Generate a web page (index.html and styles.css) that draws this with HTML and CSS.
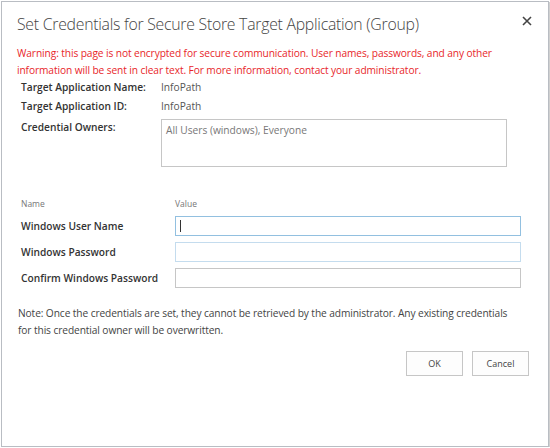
FILE: index.html
```html
<!DOCTYPE html>
<html>
<head>
<meta charset="utf-8">
<link rel="stylesheet" href="styles.css">
</head>
<body>
<div class="dialog">
  <div class="header">
    <h1 class="title">Set Credentials for Secure Store Target Application (Group)</h1>
    <span class="close">
      <svg width="10" height="10" viewBox="0 0 10 10"><path d="M1 1L9 9M9 1L1 9" stroke="#444" stroke-width="1.6"/></svg>
    </span>
  </div>
  <p class="warning">Warning: this page is not encrypted for secure communication. User names, passwords, and any other information will be sent in clear text. For more information, contact your administrator.</p>
  <div class="info">
    <div class="label">Target Application Name:</div><div class="value">InfoPath</div>
    <div class="label">Target Application ID:</div><div class="value">InfoPath</div>
    <div class="label owners-label">Credential Owners:</div><div class="owners">All Users (windows), Everyone</div>
  </div>
  <div class="creds">
    <div class="colhead">Name</div><div class="colhead">Value</div>
    <div class="flabel">Windows User Name</div><div class="field focus"><span class="caret"></span></div>
    <div class="flabel">Windows Password</div><div class="field light"></div>
    <div class="flabel">Confirm Windows Password</div><div class="field"></div>
  </div>
  <p class="note">Note: Once the credentials are set, they cannot be retrieved by the administrator. Any existing credentials for this credential owner will be overwritten.</p>
  <div class="buttons">
    <button class="btn">OK</button>
    <button class="btn">Cancel</button>
  </div>
</div>
</body>
</html>
```
FILE: styles.css
```css
html, body { margin: 0; padding: 0; background: #fff; }
body { font-family: "Open Sans", "Noto Sans", sans-serif; color: #444; }
.dialog {
  box-sizing: border-box;
  width: 548px;
  height: 446px;
  margin: 1px 0 0 1px;
  border: 1px solid #b9bdc3;
  box-shadow: 1px 1px 0 #d0d0d0, 2px 2px 1px #e0e0e0;
  background: #fff;
  padding: 0 0 0 15px;
}
.header { display: flex; align-items: flex-start; justify-content: space-between; padding: 10px 14px 0 0; }
.title { margin: 0; font-weight: 300; font-size: 15.8px; line-height: 24px; color: #444; letter-spacing: -0.25px; }
.close { padding: 4px 2px 0 0; line-height: 0; }
.warning { margin: 9px 20px 0 0; color: #e8262a; font-size: 10.2px; line-height: 17px; letter-spacing: -0.1px; }
.info { display: grid; grid-template-columns: 140px 346px; row-gap: 0; margin: -1px 0 0 4px; font-size: 10.2px; }
.label { font-weight: 600; color: #333; line-height: 19px; }
.value { color: #555; line-height: 19px; }
.owners-label { margin-top: 2px; }
.owners { margin-top: 3px; height: 48px; box-sizing: border-box; border: 1px solid #c6c6c6; padding: 3px 4px; color: #777; }
.creds { display: grid; grid-template-columns: 154px 346px; align-items: center; row-gap: 6px; margin: 31px 0 0 4px; font-size: 10.2px; }
.colhead { font-size: 8.5px; color: #777; line-height: 12px; }
.flabel { font-weight: 600; color: #333; }
.field { height: 20px; box-sizing: border-box; border: 1px solid #c6c6c6; display: flex; align-items: center; }
.field.focus { border-color: #92c0e0; }
.field.light { border-color: #c4dcee; }
.caret { display: block; width: 1px; height: 12px; background: #333; margin-left: 4px; }
.note { margin: 17px 30px 0 1px; font-size: 10.2px; line-height: 17px; color: #444; letter-spacing: -0.1px; }
.buttons { display: flex; justify-content: flex-end; gap: 9px; margin: 12px 19px 0 0; }
.btn { width: 57px; height: 25px; border: 1px solid #c6c6c6; background: #fdfdfd; font-family: inherit; font-size: 9px; color: #444; padding: 0; }
```
